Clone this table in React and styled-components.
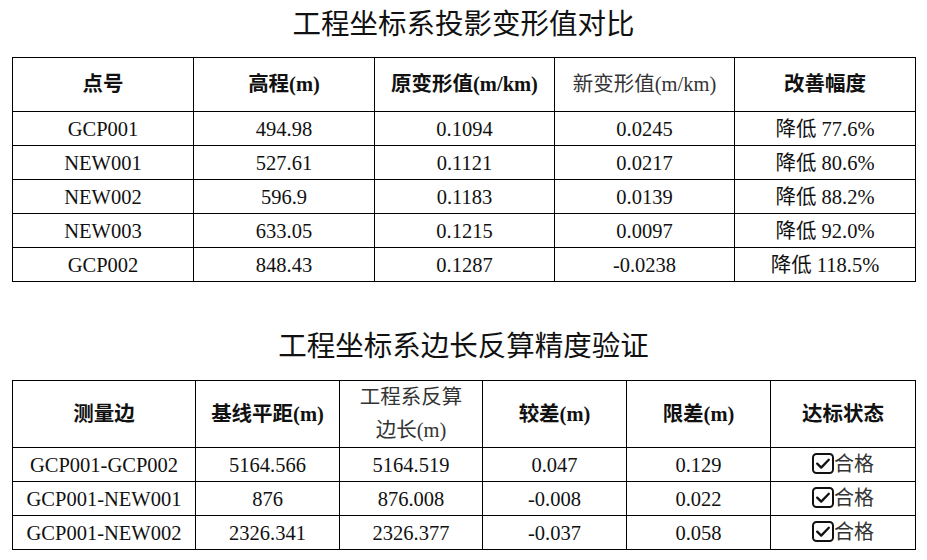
import React from "react";
import styled, { createGlobalStyle } from "styled-components";

const Global = createGlobalStyle`
  html, body { margin: 0; padding: 0; background: #fff; }
  body { font-family: "Liberation Serif", "Noto Sans CJK SC", serif; color: #111; }
`;

const Page = styled.div`
  width: 927px;
  padding: 5px 12px 0;
  box-sizing: border-box;
  display: flex;
  flex-direction: column;
`;

const Title = styled.h2`
  margin: ${(p) => (p.$first ? "0" : "45px")} 0 ${(p) => (p.$first ? "12px" : "13px")};
  height: 40px;
  line-height: 40px;
  font-size: 28.5px;
  font-weight: normal;
  text-align: center;
  color: #111;
  font-family: "Liberation Serif", "Noto Sans CJK SC", serif;
`;

const Table = styled.table`
  width: 903px;
  border-collapse: collapse;
  table-layout: fixed;
  border: 1px solid #000;
`;

const Th = styled.th`
  border: 1px solid #000;
  height: ${(p) => p.$h}px;
  padding: 0 ${(p) => (p.$pad ? p.$pad : 4)}px;
  box-sizing: border-box;
  font-size: 20.5px;
  line-height: 33px;
  text-align: center;
  vertical-align: middle;
  font-weight: ${(p) => (p.$light ? "normal" : "bold")};
  color: ${(p) => (p.$light ? "#333" : "#111")};
`;

const Td = styled.td`
  border: 1px solid #000;
  height: 34px;
  padding: 0 2px;
  box-sizing: border-box;
  font-size: 20.5px;
  line-height: 24px;
  text-align: center;
  vertical-align: middle;
  color: #111;
  white-space: nowrap;
`;

const Status = styled.span`
  display: inline-flex;
  align-items: center;
  color: #333;
  font-family: "Noto Sans CJK SC", sans-serif;
  font-size: 20px;
`;

const Box = styled.svg`
  width: 22px;
  height: 21px;
  display: block;
  margin-top: 1px;
`;

const CheckBox = () => (
  <Box viewBox="0 0 22 21">
    <rect x="1" y="1" width="20" height="19" rx="3.5" fill="#fff" stroke="#111" strokeWidth="2" />
    <path d="M5.2 10.6 L9.2 14.6 L16.8 6.8" fill="none" stroke="#111" strokeWidth="2.3" strokeLinecap="round" strokeLinejoin="round" />
  </Box>
);

const t1 = [
  ["GCP001", "494.98", "0.1094", "0.0245", "降低 77.6%"],
  ["NEW001", "527.61", "0.1121", "0.0217", "降低 80.6%"],
  ["NEW002", "596.9", "0.1183", "0.0139", "降低 88.2%"],
  ["NEW003", "633.05", "0.1215", "0.0097", "降低 92.0%"],
  ["GCP002", "848.43", "0.1287", "-0.0238", "降低 118.5%"],
];

const t2 = [
  ["GCP001-GCP002", "5164.566", "5164.519", "0.047", "0.129"],
  ["GCP001-NEW001", "876", "876.008", "-0.008", "0.022"],
  ["GCP001-NEW002", "2326.341", "2326.377", "-0.037", "0.058"],
];

const w1 = [181, 181, 180, 180, 181];
const w2 = [183, 144, 143, 144, 144, 145];

export default function App() {
  return (
    <>
      <Global />
      <Page>
        <Title $first>工程坐标系投影变形值对比</Title>
        <Table>
          <colgroup>
            {w1.map((w, i) => (
              <col key={i} style={{ width: w }} />
            ))}
          </colgroup>
          <thead>
            <tr>
              <Th $h={54}>点号</Th>
              <Th $h={54}>高程(m)</Th>
              <Th $h={54}>原变形值(m/km)</Th>
              <Th $h={54} $light>新变形值(m/km)</Th>
              <Th $h={54}>改善幅度</Th>
            </tr>
          </thead>
          <tbody>
            {t1.map((r) => (
              <tr key={r[0]}>
                {r.map((c, i) => (
                  <Td key={i}>{c}</Td>
                ))}
              </tr>
            ))}
          </tbody>
        </Table>

        <Title>工程坐标系边长反算精度验证</Title>
        <Table>
          <colgroup>
            {w2.map((w, i) => (
              <col key={i} style={{ width: w }} />
            ))}
          </colgroup>
          <thead>
            <tr>
              <Th $h={67}>测量边</Th>
              <Th $h={67}>基线平距(m)</Th>
              <Th $h={67} $light $pad={14}>工程系反算边长(m)</Th>
              <Th $h={67}>较差(m)</Th>
              <Th $h={67}>限差(m)</Th>
              <Th $h={67}>达标状态</Th>
            </tr>
          </thead>
          <tbody>
            {t2.map((r) => (
              <tr key={r[0]}>
                {r.map((c, i) => (
                  <Td key={i}>{c}</Td>
                ))}
                <Td>
                  <Status>
                    <CheckBox />
                    合格
                  </Status>
                </Td>
              </tr>
            ))}
          </tbody>
        </Table>
      </Page>
    </>
  );
}
